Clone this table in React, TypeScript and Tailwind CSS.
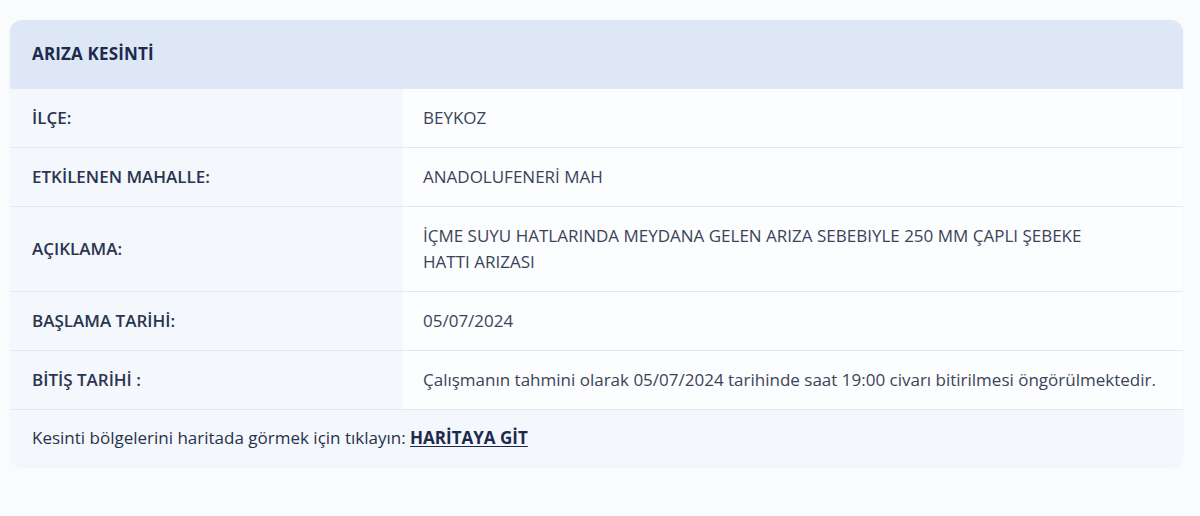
import React from "react";

const rows: { label: string; value: string; narrow?: boolean }[] = [
  { label: "İLÇE:", value: "BEYKOZ" },
  { label: "ETKİLENEN MAHALLE:", value: "ANADOLUFENERİ MAH" },
  {
    label: "AÇIKLAMA:",
    value: "İÇME SUYU HATLARINDA MEYDANA GELEN ARIZA SEBEBIYLE 250 MM ÇAPLI ŞEBEKE HATTI ARIZASI",
    narrow: true,
  },
  { label: "BAŞLAMA TARİHİ:", value: "05/07/2024" },
  {
    label: "BİTİŞ TARİHİ :",
    value: "Çalışmanın tahmini olarak 05/07/2024 tarihinde saat 19:00 civarı bitirilmesi öngörülmektedir.",
  },
];

const App = () => {
  return (
    <div
      className="min-h-[516px] w-full bg-[#f9fbfd] pt-5 pl-[10px] pr-[17px]"
      style={{ fontFamily: "'Open Sans', 'Noto Sans', sans-serif" }}
    >
      <div className="rounded-xl overflow-hidden bg-[#f4f7fb] shadow-[0_1px_3px_rgba(30,50,90,0.04)]">
        {/* header */}
        <div className="h-[69px] flex items-center px-[22px] bg-[#dde7f6] border-b border-[#e3e9f2]">
          <span className="text-[17px] font-bold text-[#1d2a4d] tracking-[0.01em]">
            ARIZA KESİNTİ
          </span>
        </div>

        {rows.map((row) => (
          <div
            key={row.label}
            className="grid grid-cols-[392px_1fr] border-b border-[#e4e8ee]"
          >
            <div className="px-[22px] py-4 flex items-center bg-[#f4f7fb]">
              <span className="text-[17px] leading-[26px] font-semibold text-[#2a3450]">
                {row.label}
              </span>
            </div>
            <div className="pl-[21px] pr-[12px] py-4 bg-[#fcfdff]">
              <span
                className={
                  row.narrow
                    ? "block max-w-[680px] text-[17px] leading-[26px] text-[#3b4357]"
                    : "block text-[17px] leading-[26px] text-[#3b4357]"
                }
              >
                {row.value}
              </span>
            </div>
          </div>
        ))}

        <div className="h-[56px] flex items-center px-[22px] bg-[#f4f7fb]">
          <span className="text-[17px] text-[#27324d]">
            Kesinti bölgelerini haritada görmek için tıklayın:{" "}
            <a href="#" className="font-bold text-[#1d2a4d] underline underline-offset-2">
              HARİTAYA GİT
            </a>
          </span>
        </div>
      </div>
    </div>
  );
};

export default App;
